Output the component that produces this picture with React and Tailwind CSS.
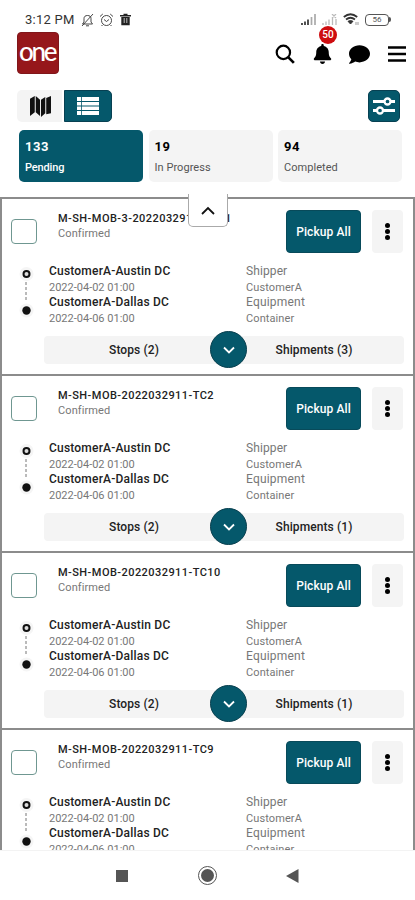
import React from "react";
import { FaBell, FaComment } from "react-icons/fa";

const shipments = [
  { id: "M-SH-MOB-3-2022032911-TC11", count: 3 },
  { id: "M-SH-MOB-2022032911-TC2", count: 1 },
  { id: "M-SH-MOB-2022032911-TC10", count: 1 },
  { id: "M-SH-MOB-2022032911-TC9", count: 1 },
];

const tabs = [
  { total: "133", label: "Pending", active: true },
  { total: "19", label: "In Progress" },
  { total: "94", label: "Completed" },
];

const StatusBar = () => (
  <div className="flex h-[30px] shrink-0 items-start justify-between pl-[25px] pr-[24px] pt-[11px] text-[#333]">
    <div className="flex h-[17px] items-center">
      <span className="w-[50px] whitespace-nowrap text-[13px] leading-[17px] tracking-[0.25px]">3:12 PM</span>
      <svg className="ml-[6px]" width="13" height="14" viewBox="0 0 13 14" fill="none" stroke="currentColor" strokeWidth=".9">
        <path d="M1.500 11h10L10 9V5.500C10 3.500 8.600 2.500 6.500 2.500S3 3.500 3 5.500V9zM5 12.800h3M12 1 1 13" />
      </svg>
      <svg className="ml-[5px]" width="15" height="14" viewBox="0 0 15 14" fill="none" stroke="currentColor" strokeWidth=".9">
        <circle cx="7.500" cy="7.500" r="5" />
        <path d="M1 3.500 3.800 1M14 3.500 11.200 1M5 6.500l2.500 2 2.500-2M3.500 12l-1 1M11.500 12l1 1" />
      </svg>
      <svg className="ml-[6px]" width="11" height="13" viewBox="0 0 11 13">
        <path fill="#222" d="M0 2h3.500V.800h4V2H11v1.400H0zM1.300 4h8.400v8.200H1.300z" />
        <path stroke="#fff" strokeWidth=".7" d="M4.200 5v5M6.800 5v5" />
      </svg>
    </div>
    <div className="flex h-[17px] items-center">
      <svg width="15" height="11" viewBox="0 0 15 11" strokeWidth="1.700">
        <path stroke="#333" d="M1 11V9M4 11V7.500M7 11V5.500" />
        <path stroke="#aaa" d="M10.500 11V3M14 11V0" />
      </svg>
      <svg className="ml-[6px]" width="15" height="11" viewBox="0 0 15 11" strokeWidth="1.300" stroke="#bbb">
        <path d="M1 11V9M4 11V7.500M7 11V5.500M10.500 11V4M14 11V5M10 0l4 4M14 0l-4 4" />
      </svg>
      <svg className="ml-[6px]" width="16" height="13" viewBox="0 0 16 13" fill="none" stroke="#333">
        <path strokeWidth="1.800" d="M.800 4Q7.500-1.500 14.200 4M3 6.500Q7.500 3 12 6.500" />
        <path fill="#333" d="M5 8.300Q7.500 6.800 10 8.300L7.500 11z" />
        <path stroke="#999" d="M13 9v3M15 9v3" />
      </svg>
      <div className="ml-[6px] flex h-[12px] w-[24px] items-center justify-center rounded-[4px] border border-[#555] text-[8px] leading-none text-[#555]">56</div>
      <div className="h-[5px] w-[2px] rounded-r bg-[#555]" />
    </div>
  </div>
);

const Header = () => (
  <div className="flex h-[60px] shrink-0 justify-between pl-[17px] pr-[9px] pt-[2px]">
    <div className="flex h-[42px] w-[42px] justify-center rounded-[4px] border border-[#80161a] bg-[#96171b] font-['Lato','Liberation_Sans',sans-serif] text-[26px] font-medium leading-[37px] tracking-[-2.300px] text-white">
      <span className="-ml-[2px]">one</span>
    </div>
    <div className="flex h-[42px] items-center text-black">
      <svg className="mt-[1px]" width="20" height="20" viewBox="0 0 21 21" fill="none" stroke="currentColor">
        <circle cx="8.800" cy="8.800" r="7" strokeWidth="2.300" />
        <path strokeWidth="2.800" d="m13.800 13.800 6 6" />
      </svg>
      <div className="relative ml-[18px] mt-[2px]">
        <FaBell className="h-[20px] w-[19px]" />
        <span className="absolute -top-[18px] left-[6px] flex h-[18px] w-[18px] items-center justify-center rounded-full bg-[#ce0d10] text-[10px] font-medium leading-none text-white">
          50
        </span>
      </div>
      <FaComment className="ml-[17px] mt-[2px] h-[21px] w-[21px]" />
      <svg className="ml-[18px] mt-[1px]" width="18" height="16" viewBox="0 0 18 16" stroke="currentColor" strokeWidth="2.300">
        <path d="M0 1.500h18M0 8h18M0 14.500h18" />
      </svg>
    </div>
  </div>
);

const Toolbar = () => (
  <div className="flex h-[40px] shrink-0 items-start justify-between pl-[17px] pr-[15px]">
    <div className="flex h-[32px] gap-[2px]">
      <button className="flex w-[45px] items-center justify-center rounded-l-[5px] bg-[#f4f4f4]">
        <svg className="ml-[1px] mt-[1px]" width="21" height="21" viewBox="0 0 22 22" fill="#111">
          <path d="M0 3 5 0v17L0 21zM6 0l4.500 4v17L6 17zM11.500 4 16 1v17l-4.500 4zM17 2l5-2v18l-5 1z" />
        </svg>
      </button>
      <button className="flex w-[48px] items-center justify-center rounded-r-[5px] border border-[#074052] bg-[#05586b]">
        <svg width="22" height="18" viewBox="0 0 22 18">
          <path fill="#fff" d="M0 0h22v18H0z" />
          <path stroke="#05586b" strokeWidth="1.200" d="M0 4.500h22M0 9h22M0 13.500h22" />
          <path stroke="#05586b" strokeWidth=".8" d="M4.500 0v18" />
        </svg>
      </button>
    </div>
    <button className="flex h-[32px] w-[32px] items-center justify-center rounded-[5px] border border-[#074052] bg-[#05586b]">
      <svg width="22" height="18" viewBox="0 0 22 18" fill="#05586b" stroke="#fff" strokeWidth="2.300">
        <path d="M0 4.500h22M0 13.500h22" strokeWidth="3" />
        <circle cx="14.500" cy="4.500" r="3" />
        <circle cx="7" cy="13.500" r="3" />
      </svg>
    </button>
  </div>
);

const StatusTabs = () => (
  <div className="flex h-[67px] shrink-0 gap-[5.500px] pl-[19px]">
    {tabs.map((tab) => (
      <div
        key={tab.label}
        className={`flex h-[52px] w-[124px] flex-col rounded-[5px] pl-[6px] pt-[8px] ${
          tab.active ? "bg-[#05586b] text-white" : "bg-[#f4f4f4] text-black"
        }`}
      >
        <span className="text-[13px] font-bold leading-[18px] tracking-[0.5px]">{tab.total}</span>
        <span
          className={`mt-[4px] text-[11px] leading-[16px] ${
            tab.active ? "font-medium tracking-[-0.150px]" : "tracking-[0.050px] text-[#555]"
          }`}
        >
          {tab.label}
        </span>
      </div>
    ))}
  </div>
);

const ShipmentCard = ({ shipment }) => (
  <div className="h-[177px] shrink-0 border-x-2 border-t-2 border-[#8c8c8c] bg-white">
    <div className="flex h-[62px] pl-[9px] pt-[11px]">
      <div className="mt-[9px] h-[25px] w-[26px] shrink-0 rounded-[4px] border border-[#6f9791]" />
      <div className="ml-[21px] flex w-[228px] shrink-0 flex-col whitespace-nowrap pt-[1px]">
        <span className="text-[11px] font-medium leading-[15px] tracking-[0.450px] text-[#222]">{shipment.id}</span>
        <span className="text-[11px] leading-[16px] tracking-[0.100px] text-[#777]">Confirmed</span>
      </div>
      <button className="h-[43px] w-[75px] shrink-0 rounded-[4px] border border-[#084a5a] bg-[#05586b] text-[12px] font-medium tracking-[0.100px] text-white">
        Pickup All
      </button>
      <button className="ml-[11px] flex h-[43px] w-[31px] shrink-0 flex-col items-center justify-center gap-[1px] rounded-[4px] bg-[#f4f4f4]">
        <span className="h-[5px] w-[5px] rounded-full bg-black" />
        <span className="h-[5px] w-[5px] rounded-full bg-black" />
        <span className="h-[5px] w-[5px] rounded-full bg-black" />
      </button>
    </div>

    <div className="flex h-[75px] pt-[3px]">
      <svg className="ml-[16px] mt-[3px]" width="18" height="52" viewBox="0 0 18 52">
        <circle cx="8.500" cy="7" r="7" fill="#f5f5f5" />
        <circle cx="8.500" cy="7" r="3" fill="#ddd" stroke="#111" strokeWidth="2" />
        <path d="M8 15v20" stroke="#777" strokeDasharray="3 2" />
        <circle cx="8.500" cy="43.500" r="7" fill="#f5f5f5" />
        <circle cx="8.500" cy="43.500" r="4.200" fill="#111" />
      </svg>
      <div className="ml-[13px] flex w-[197px] flex-col whitespace-nowrap text-[11px] leading-[15.700px] text-[#777]">
        <span className="text-[12px] font-medium tracking-[0.200px] text-[#222]">CustomerA-Austin DC</span>
        <span>2022-04-02 01:00</span>
        <span className="text-[12px] font-medium tracking-[0.200px] text-[#222]">CustomerA-Dallas DC</span>
        <span>2022-04-06 01:00</span>
      </div>
      <div className="flex flex-col text-[11px] leading-[15.700px] text-[#777]">
        <span className="text-[12px] tracking-[0.100px]">Shipper</span>
        <span className="tracking-[0.100px]">CustomerA</span>
        <span className="text-[12px] tracking-[0.200px]">Equipment</span>
        <span className="tracking-[0.100px]">Container</span>
      </div>
    </div>

    <div className="relative ml-[42px] flex h-[28px] w-[360px] items-center rounded-[4px] bg-[#f4f4f4] text-[12px] font-medium tracking-[0.100px] text-[#222]">
      <span className="w-[180px] text-center">Stops (2)</span>
      <span className="w-[180px] text-center">Shipments ({shipment.count})</span>
      <button className="absolute -top-[5px] left-[166px] flex h-[37px] w-[37px] items-center justify-center rounded-full border border-[#083f4e] bg-[#05586b]">
        <svg width="12" height="8" viewBox="0 0 12 8" fill="none" stroke="#fff" strokeWidth="1.800">
          <path d="m1 1.500 5 5 5-5" />
        </svg>
      </button>
    </div>
  </div>
);

const NavBar = () => (
  <div className="flex h-[50px] shrink-0 items-center border-t border-[#f3f3f3] bg-white pl-[116px]">
    <div className="h-[12px] w-[12px] bg-[#555]" />
    <div className="ml-[70px] flex h-[19px] w-[19px] items-center justify-center rounded-full border border-[#555]">
      <div className="h-[13px] w-[13px] rounded-full bg-[#555]" />
    </div>
    <svg className="ml-[69px]" width="13" height="14" viewBox="0 0 13 14">
      <path fill="#555" d="M12.500 0v14L0 7z" />
    </svg>
  </div>
);

const App = () => {
  return (
    <div className="flex h-[900px] w-[415px] flex-col overflow-hidden bg-white font-['Roboto','Liberation_Sans',sans-serif]">
      <StatusBar />
      <Header />
      <Toolbar />
      <StatusTabs />
      <div className="relative h-[653px] shrink-0">
        <div className="flex h-full flex-col overflow-hidden">
          {shipments.map((shipment) => (
            <ShipmentCard key={shipment.id} shipment={shipment} />
          ))}
        </div>
        {/* collapse handle */}
        <button className="absolute -top-[3px] left-[188px] flex h-[33px] w-[40px] items-center justify-center rounded-b-[5px] border border-t-0 border-[#aaa] bg-white">
          <svg width="14" height="9" viewBox="0 0 14 9" fill="none" stroke="#111" strokeWidth="1.800">
            <path d="m1 8 6-6 6 6" />
          </svg>
        </button>
      </div>
      <NavBar />
    </div>
  );
};

export default App;
